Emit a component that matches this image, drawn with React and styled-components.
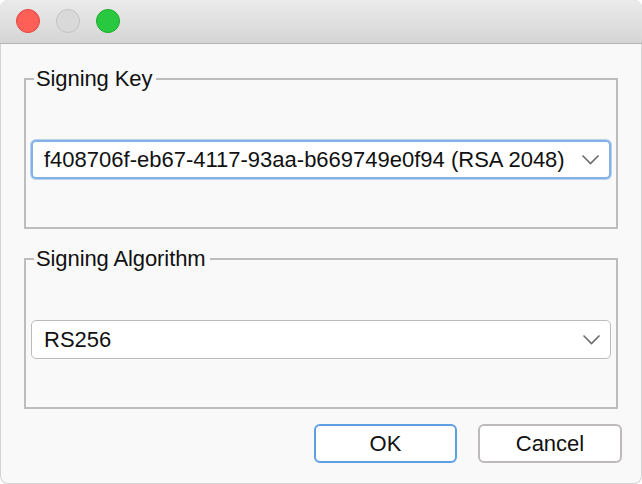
import * as React from 'react'
import styled, { createGlobalStyle } from 'styled-components'

const GlobalStyle = createGlobalStyle`
  html, body {
    margin: 0;
    padding: 0;
    background: #ffffff;
  }
  * {
    box-sizing: border-box;
  }
`

const Window = styled.div`
  width: 642px;
  height: 484px;
  display: flex;
  flex-direction: column;
  background: #f9f9f9;
  border-radius: 8px;
  overflow: hidden;
  box-shadow: inset 0 0 0 1px #d4d4d4;
  font-family: "Liberation Sans", Arial, Helvetica, sans-serif;
  font-size: 22px;
  color: #111;
`

const TitleBar = styled.div`
  height: 44px;
  flex: none;
  display: flex;
  align-items: center;
  gap: 16px;
  padding: 0 0 1px 16px;
  background: linear-gradient(#ebebeb, #d5d5d5);
  border-bottom: 1px solid #b4b4b4;
  border-radius: 8px 8px 0 0;
`

const Light = styled.span`
  width: 24px;
  height: 24px;
  border-radius: 50%;
  background: ${p => p.color};
  border: 1px solid ${p => p.edge};
`

const Body = styled.div`
  flex: 1;
  display: flex;
  flex-direction: column;
  gap: 18px;
  padding: 23px 24px 0 24px;
`

const Group = styled.fieldset`
  margin: 0;
  min-width: 0;
  border: 2px solid #bdbdbd;
  padding: 49px 5px 48px 5px;
`

const Legend = styled.legend`
  padding: 0 4px 0 2px;
  margin-left: 3px;
  line-height: 24px;
  height: 24px;
  letter-spacing: -0.1px;
`

const Select = styled.div`
  height: 39px;
  display: flex;
  align-items: center;
  justify-content: space-between;
  padding: 0 9px 0 13px;
  background: #ffffff;
  border-radius: 5px;
  border: ${p => (p.focused ? '2px solid #84b1e6' : '1px solid #bdbaba')};
  box-shadow: ${p => (p.focused ? '0 0 0 1px #b7d2f1' : 'none')};
  padding-left: ${p => (p.focused ? '11px' : '12px')};
  line-height: 24px;
  white-space: nowrap;
`

const Chevron = () => (
  <svg width="19" height="11" viewBox="0 0 19 11">
    <path d="M1.5 1.5 L9.5 9.5 L17.5 1.5" fill="none" stroke="#6b6b6b" strokeWidth="1.6" />
  </svg>
)

const Buttons = styled.div`
  display: flex;
  justify-content: flex-end;
  gap: 21px;
  margin-top: -3px;
  margin-right: -4px;
`

const Button = styled.button`
  width: ${p => p.w}px;
  height: 39px;
  padding: 0;
  font-family: inherit;
  font-size: 22px;
  color: #111;
  background: #ffffff;
  border-radius: 6px;
  border: 2px solid ${p => (p.primary ? '#5d9fe2' : '#bfbaba')};
`

export default function App() {
  return (
    <>
      <GlobalStyle />
      <Window>
        <TitleBar>
          <Light color="#fe5f57" edge="#e2463f" />
          <Light color="#d9d9d9" edge="#c2c2c2" />
          <Light color="#28c840" edge="#1aab29" />
        </TitleBar>
        <Body>
          <Group>
            <Legend>Signing Key</Legend>
            <Select focused>
              <span>f408706f-eb67-4117-93aa-b669749e0f94 (RSA 2048)</span>
              <Chevron />
            </Select>
          </Group>
          <Group>
            <Legend>Signing Algorithm</Legend>
            <Select>
              <span>RS256</span>
              <Chevron />
            </Select>
          </Group>
          <Buttons>
            <Button primary w={143}>OK</Button>
            <Button w={144}>Cancel</Button>
          </Buttons>
        </Body>
      </Window>
    </>
  )
}
